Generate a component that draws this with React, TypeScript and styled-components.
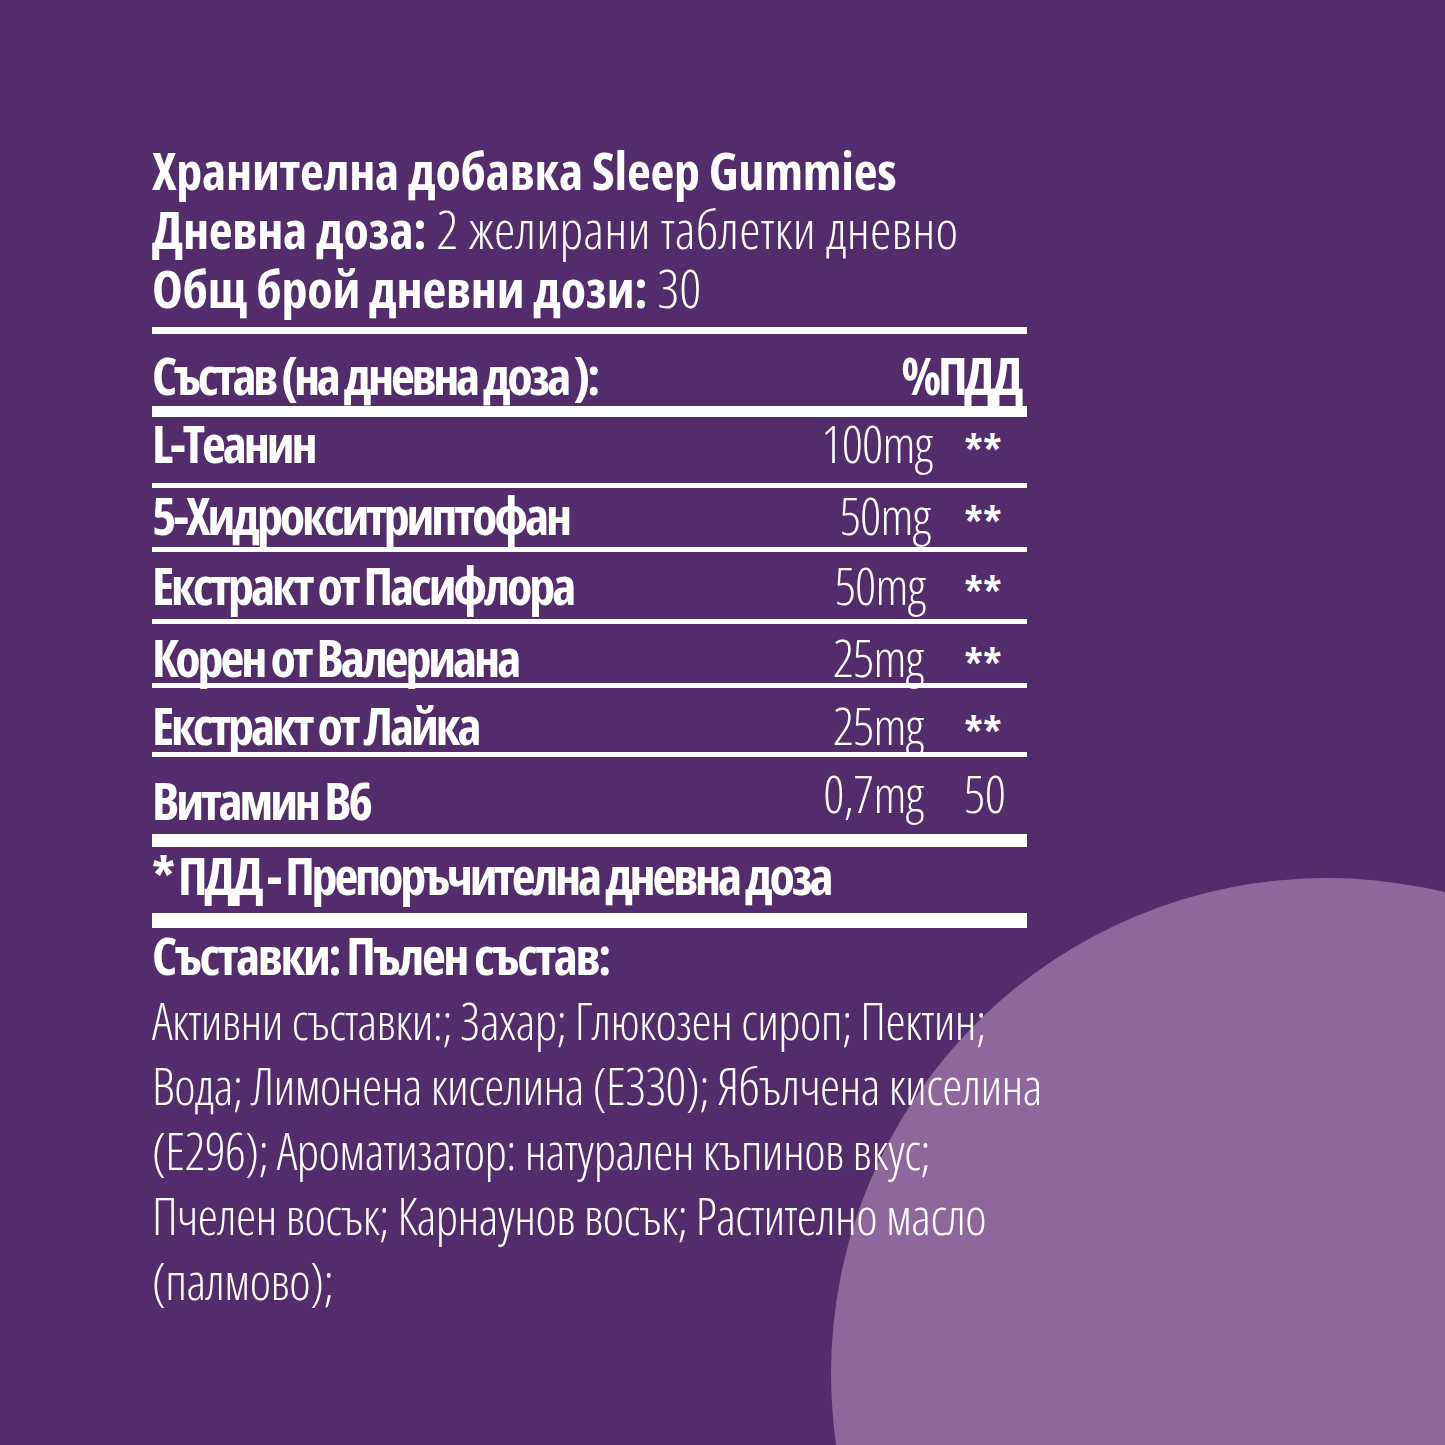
import React from "react";
import styled, { createGlobalStyle } from "styled-components";

const GlobalStyle = createGlobalStyle`
  html, body { margin: 0; padding: 0; }
  body {
    background: #532c6b;
    color: #ffffff;
    font-family: "Open Sans", "Noto Sans", sans-serif;
    font-stretch: 75%;
  }
`;

const Page = styled.div`
  position: relative;
  width: 1445px;
  height: 1445px;
  overflow: hidden;
  background: #532c6b;
`;

const Circle = styled.div`
  position: absolute;
  left: 831px;
  top: 878px;
  width: 992px;
  height: 992px;
  border-radius: 50%;
  background: #8e689c;
`;

const Content = styled.div`
  position: relative;
  width: 875px;
  padding: 140px 0 0 152px;
  display: flex;
  flex-direction: column;
`;

const TitleBlock = styled.div`
  display: flex;
  flex-direction: column;
  font-size: 52px;
  line-height: 59px;
  white-space: nowrap;
`;

const TitleLine = styled.div`
  height: 59px;
`;

const Bold = styled.span`
  font-weight: 700;
  letter-spacing: -0.25px;
`;

const Light = styled.span`
  font-weight: 300;
  font-size: 54px;
  letter-spacing: 0.2px;
`;

const Rule = styled.div<{ $h: number; $mt?: number }>`
  height: ${(p) => p.$h}px;
  margin-top: ${(p) => p.$mt || 0}px;
  background: #ffffff;
`;

const Row = styled.div<{ $h: number; $pt: number }>`
  height: ${(p) => p.$h}px;
  box-sizing: border-box;
  padding-top: ${(p) => p.$pt}px;
  display: grid;
  grid-template-columns: 1fr 180px 97px;
  align-items: start;
  font-size: 52px;
  line-height: 52px;
  white-space: nowrap;
`;

const HeaderRow = styled(Row)`
  grid-template-columns: 1fr auto;
  padding-right: 7px;
`;

const Label = styled.div<{ $ls?: number }>`
  font-weight: 700;
  letter-spacing: ${(p) => (p.$ls ?? -3.1)}px;
`;

const Value = styled.div<{ $dx?: number; $dy?: number }>`
  font-weight: 300;
  letter-spacing: -0.8px;
  text-align: right;
  margin-right: ${(p) => -2 + (p.$dx || 0)}px;
  margin-top: ${(p) => p.$dy || 0}px;
`;

const Pct = styled.div<{ $star?: boolean }>`
  font-weight: ${(p) => (p.$star ? 600 : 300)};
  font-size: ${(p) => (p.$star ? 46 : 52)}px;
  letter-spacing: -0.5px;
  padding-left: 34px;
  margin-top: ${(p) => (p.$star ? 8 : -7)}px;
`;

const Footnote = styled.div<{ $h: number; $pt: number }>`
  height: ${(p) => p.$h}px;
  box-sizing: border-box;
  padding-top: ${(p) => p.$pt}px;
  font-size: 52px;
  line-height: 52px;
  font-weight: 700;
  letter-spacing: -3.2px;
  white-space: nowrap;
`;

const Heading = styled.div`
  font-size: 52px;
  line-height: 52px;
  font-weight: 700;
  letter-spacing: -2.4px;
  padding-top: 1px;
  white-space: nowrap;
`;

const Body = styled.div`
  margin-top: 7px;
  display: flex;
  flex-direction: column;
  font-size: 51px;
  line-height: 65px;
  font-weight: 300;
  letter-spacing: -0.6px;
  white-space: nowrap;
`;

type Item = {
  name: string;
  amount: string;
  pct: string;
  h: number;
  pt: number;
  rule: number;
  dx?: number;
  dy?: number;
};

const items: Item[] = [
  { name: "L-Теанин", amount: "100mg", pct: "**", h: 66, pt: 0, rule: 5 },
  { name: "5-Хидрокситриптофан", amount: "50mg", pct: "**", h: 59, pt: 1, rule: 5, dx: 2 },
  { name: "Екстракт от Пасифлора", amount: "50mg", pct: "**", h: 67, pt: 7, rule: 5, dx: 7 },
  { name: "Корен от Валериана", amount: "25mg", pct: "**", h: 59, pt: 7, rule: 5, dx: 9 },
  { name: "Екстракт от Лайка", amount: "25mg", pct: "**", h: 64, pt: 11, rule: 5, dx: 9 },
  { name: "Витамин B6", amount: "0,7mg", pct: "50", h: 77, pt: 17, rule: 13, dx: 9, dy: -7 },
];

const bodyLines = [
  "Активни съставки:; Захар; Глюкозен сироп; Пектин;",
  "Вода; Лимонена киселина (E330); Ябълчена киселина",
  "(E296); Ароматизатор: натурален къпинов вкус;",
  "Пчелен восък; Карнаунов восък; Растително масло",
  "(палмово);",
];

export default function App() {
  return (
    <Page>
      <GlobalStyle />
      <Circle />
      <Content>
        <TitleBlock>
          <TitleLine>
            <Bold>Хранителна добавка Sleep Gummies</Bold>
          </TitleLine>
          <TitleLine>
            <Bold>Дневна доза:</Bold> <Light>2 желирани таблетки дневно</Light>
          </TitleLine>
          <TitleLine>
            <Bold>Общ брой дневни дози:</Bold> <Light>30</Light>
          </TitleLine>
        </TitleBlock>
        <Rule $h={7} $mt={10} />
        <HeaderRow $h={72} $pt={15}>
          <Label $ls={-3.3}>Състав (на дневна доза ):</Label>
          <Label $ls={-3.3}>%ПДД</Label>
        </HeaderRow>
        <Rule $h={11} />
        {items.map((it) => (
          <React.Fragment key={it.name}>
            <Row $h={it.h} $pt={it.pt}>
              <Label>{it.name}</Label>
              <Value $dx={it.dx} $dy={it.dy}>
                {it.amount}
              </Value>
              <Pct $star={it.pct === "**"}>{it.pct}</Pct>
            </Row>
            <Rule $h={it.rule} />
          </React.Fragment>
        ))}
        <Footnote $h={66} $pt={2}>
          * ПДД - Препоръчителна дневна доза
        </Footnote>
        <Rule $h={15} />
        <Heading>Съставки: Пълен състав:</Heading>
        <Body>
          {bodyLines.map((l) => (
            <div key={l}>{l}</div>
          ))}
        </Body>
      </Content>
    </Page>
  );
}
